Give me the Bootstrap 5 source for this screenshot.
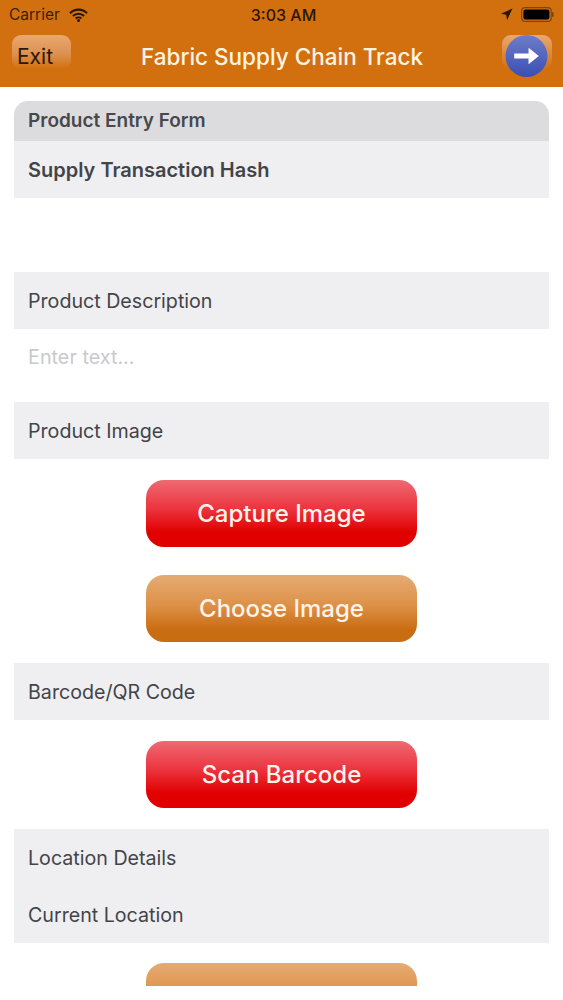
<!DOCTYPE html>
<html lang="en">
<head>
<meta charset="utf-8">
<title>Fabric Supply Chain Track</title>
<link href="https://cdn.jsdelivr.net/npm/bootstrap@5.3.0/dist/css/bootstrap.min.css" rel="stylesheet">
<style>
html,body{height:1000px;overflow:hidden;background:#fff;font-family:Inter,"Liberation Sans",sans-serif;}
.app-top{height:87px;background:#d2700f;}
.status-row{height:29px;padding:0 9px;font-size:15.500px;color:#3a2008;}
.status-time{font-size:16px;font-weight:500;color:#2a1604;margin-left:4px;}
.status-side{flex:1 1 0;}
.wifi-gap{gap:9px;}
.title-row{height:58px;padding:6px 11px 0 12px;}
.title-side{flex:1 1 0;}
.exit-btn{width:59px;height:34px;padding:7px 0 0 5px;border-radius:9px;font-size:21px;line-height:29px;color:#2c1606;background:linear-gradient(#e9a873,#dd9150 55%,#d2700f);}
.app-title{font-size:22.500px;font-weight:500;color:#fff4e2;line-height:30px;margin-top:7px;}
.next-wrap{width:50px;height:34px;border-radius:9px;background:linear-gradient(#e9a873,#d2700f);position:relative;}
.next-circle{position:absolute;left:3px;top:0;width:43px;height:42px;}
.form-scroll{height:899px;overflow:hidden;padding:14px 14px 0;}
.sec-head{height:40px;background:#dcdcde;border-radius:14px 14px 0 0;padding:1px 14px 0;font-size:19px;font-weight:600;color:#48484c;}
.sec-row{height:57px;background:#efeff2;padding:3px 14px 0;font-size:19.650px;color:#444448;}
.sec-strong{font-weight:600;font-size:20px;padding-top:1px;}
.blank-row{height:74px;}
.input-row{height:73px;padding:0 14px 15px;font-size:19.800px;color:#c9c9cd;}
.grad-btn{width:271px;height:67px;border-radius:18px;padding-top:1px;font-size:24px;font-weight:500;color:#fff3ea;}
.grad-red{background:linear-gradient(#ee6a72,#ec3540 42%,#e00000 78%,#e00000);}
.grad-orange{background:linear-gradient(#e5ab74,#dd9148 45%,#c96d12 82%,#c96d12);}
.pad-21{padding-top:21px;}
.pad-28{padding-top:28px;}
.pad-20{padding-top:20px;}
</style>
</head>
<body>
<header class="app-top">
  <div class="status-row d-flex align-items-center">
    <div class="status-side d-flex align-items-center wifi-gap">
      <span>Carrier</span>
      <svg width="19" height="14" viewBox="0 0 19 14" aria-hidden="true"><path d="M1 5.200a12 12 0 0 1 17 0M3.900 8a8 8 0 0 1 11.200 0M6.700 10.600a4 4 0 0 1 5.600 0" fill="none" stroke="#2a1604" stroke-width="2.100"/><circle cx="9.500" cy="12.500" r="1.500" fill="#2a1604"/></svg>
    </div>
    <span class="status-time">3:03 AM</span>
    <div class="status-side d-flex align-items-center justify-content-end gap-2">
      <svg width="13" height="13" viewBox="0 0 13 13" aria-hidden="true"><path d="M12.500.5 1 5.800l5.200.9.9 5.300z" fill="#2a1604"/></svg>
      <svg width="33" height="15" viewBox="0 0 33 15" aria-hidden="true"><rect x=".6" y=".6" width="29.600" height="13.800" rx="3.500" fill="none" stroke="#7a4510" stroke-width="1.200"/><rect x="2.400" y="2.400" width="26" height="10.200" rx="2" fill="#000"/><rect x="31" y="5" width="1.600" height="5" rx=".8" fill="#7a4510"/></svg>
    </div>
  </div>
  <div class="title-row d-flex align-items-start">
    <div class="title-side d-flex"><div class="exit-btn">Exit</div></div>
    <div class="app-title">Fabric Supply Chain Track</div>
    <div class="title-side d-flex justify-content-end">
      <div class="next-wrap">
        <svg class="next-circle" viewBox="0 0 41 41" aria-hidden="true"><defs><linearGradient id="gb" x1="0" y1="0" x2="0" y2="1"><stop offset="0" stop-color="#6e7cc8"/><stop offset="1" stop-color="#3a4fb4"/></linearGradient></defs><circle cx="20.500" cy="20.500" r="20.500" fill="url(#gb)"/><path d="M8.500 18h14v-5.500l10 8-10 8V23h-14z" fill="#fff"/></svg>
      </div>
    </div>
  </div>
</header>
<main class="form-scroll">
  <div class="sec-head d-flex align-items-center">Product Entry Form</div>
  <div class="sec-row sec-strong d-flex align-items-center">Supply Transaction Hash</div>
  <div class="blank-row"></div>
  <div class="sec-row d-flex align-items-center">Product Description</div>
  <div class="input-row d-flex align-items-center">Enter text...</div>
  <div class="sec-row d-flex align-items-center">Product Image</div>
  <div class="pad-21 d-flex justify-content-center"><div class="grad-btn grad-red d-flex align-items-center justify-content-center">Capture Image</div></div>
  <div class="pad-28 d-flex justify-content-center"><div class="grad-btn grad-orange d-flex align-items-center justify-content-center">Choose Image</div></div>
  <div class="pad-21"><div class="sec-row d-flex align-items-center">Barcode/QR Code</div></div>
  <div class="pad-21 d-flex justify-content-center"><div class="grad-btn grad-red d-flex align-items-center justify-content-center">Scan Barcode</div></div>
  <div class="pad-21"><div class="sec-row d-flex align-items-center">Location Details</div></div>
  <div class="sec-row d-flex align-items-center">Current Location</div>
  <div class="pad-20 d-flex justify-content-center"><div class="grad-btn grad-orange"></div></div>
</main>
</body>
</html>
